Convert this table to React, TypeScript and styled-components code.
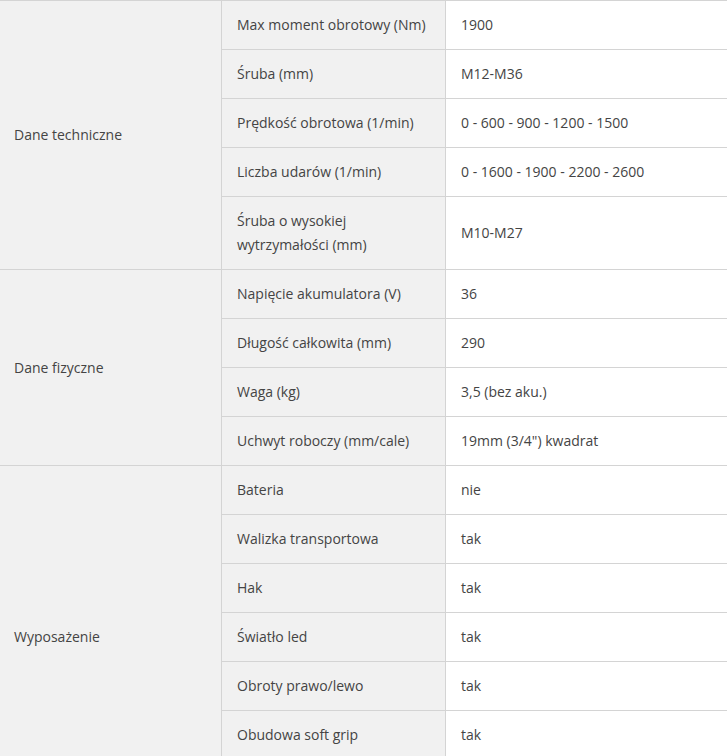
import React from "react";
import styled, { createGlobalStyle } from "styled-components";

const Global = createGlobalStyle`
  html, body { margin: 0; padding: 0; background: #fff; }
  body { font-family: "Open Sans", "Noto Sans", sans-serif; }
`;

const Table = styled.table`
  width: 727px;
  border-collapse: separate;
  border-spacing: 0;
  table-layout: fixed;
  border-top: 1px solid #d4d4d4;
  font-family: "Open Sans", "Noto Sans", sans-serif;
  font-size: 14px;
  line-height: 24px;
  color: #444;
`;

const Cell = styled.td<{ $tone: "group" | "label" | "value" }>`
  box-sizing: border-box;
  padding: 12px 15px;
  padding-left: ${(p) => (p.$tone === "group" ? "14px" : "15px")};
  vertical-align: middle;
  text-align: left;
  background: ${(p) => (p.$tone === "value" ? "#ffffff" : "#f1f1f1")};
  border-bottom: 1px solid #d4d4d4;
  border-right: ${(p) => (p.$tone === "value" ? "none" : "1px solid #d4d4d4")};
`;

type Group = { name: string; rows: [string, string][] };

const groups: Group[] = [
  {
    name: "Dane techniczne",
    rows: [
      ["Max moment obrotowy (Nm)", "1900"],
      ["Śruba (mm)", "M12-M36"],
      ["Prędkość obrotowa (1/min)", "0 - 600 - 900 - 1200 - 1500"],
      ["Liczba udarów (1/min)", "0 - 1600 - 1900 - 2200 - 2600"],
      ["Śruba o wysokiej wytrzymałości (mm)", "M10-M27"],
    ],
  },
  {
    name: "Dane fizyczne",
    rows: [
      ["Napięcie akumulatora (V)", "36"],
      ["Długość całkowita (mm)", "290"],
      ["Waga (kg)", "3,5 (bez aku.)"],
      ["Uchwyt roboczy (mm/cale)", "19mm (3/4\") kwadrat"],
    ],
  },
  {
    name: "Wyposażenie",
    rows: [
      ["Bateria", "nie"],
      ["Walizka transportowa", "tak"],
      ["Hak", "tak"],
      ["Światło led", "tak"],
      ["Obroty prawo/lewo", "tak"],
      ["Obudowa soft grip", "tak"],
      ["Ładowarka", "nie"],
    ],
  },
];

export default function App() {
  return (
    <>
      <Global />
      <Table>
        <colgroup>
          <col style={{ width: 222 }} />
          <col style={{ width: 224 }} />
          <col />
        </colgroup>
        <tbody>
          {groups.map((g) =>
            g.rows.map(([label, value], i) => (
              <tr key={g.name + i}>
                {i === 0 && (
                  <Cell $tone="group" rowSpan={g.rows.length}>
                    {g.name}
                  </Cell>
                )}
                <Cell $tone="label">{label}</Cell>
                <Cell $tone="value">{value}</Cell>
              </tr>
            ))
          )}
        </tbody>
      </Table>
    </>
  );
}
